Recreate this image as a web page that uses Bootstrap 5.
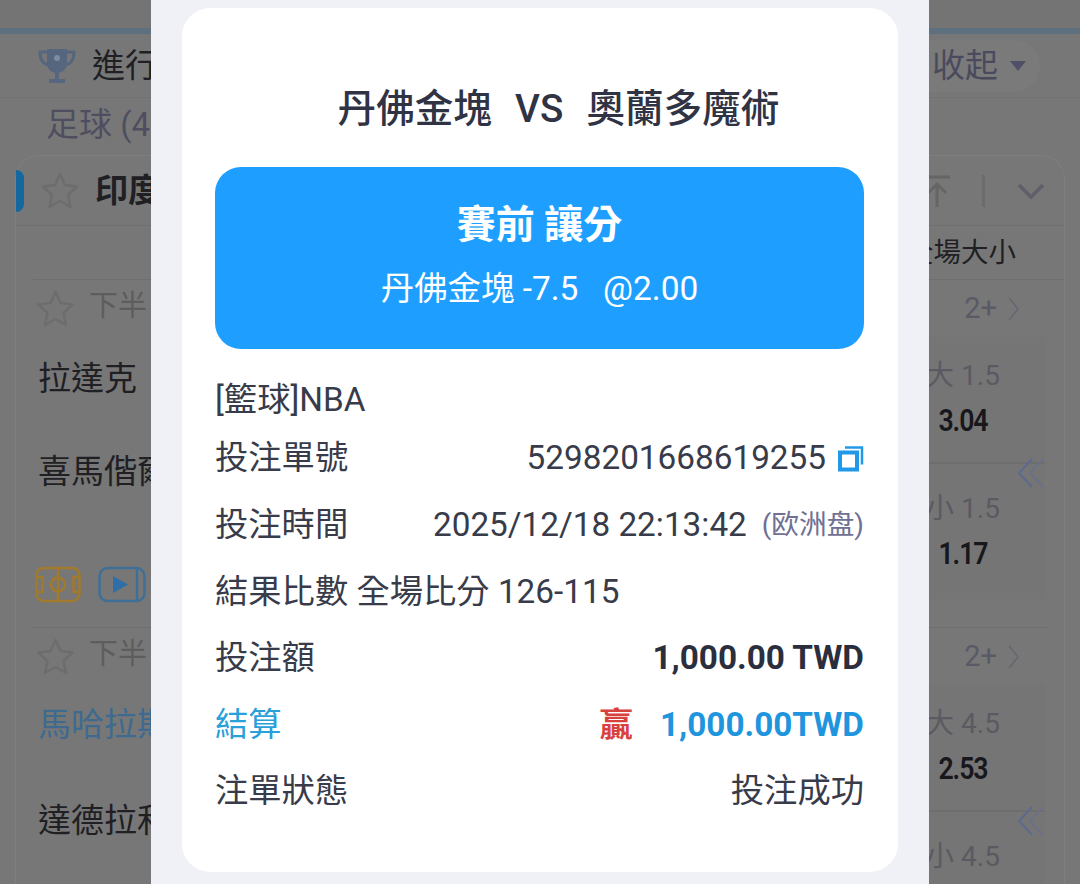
<!DOCTYPE html>
<html lang="zh-Hant">

<head>
    <meta charset="UTF-8">
    <meta name="viewport" content="width=device-width, initial-scale=1.0">
    <title>注單詳情</title>
    <link href="https://cdn.jsdelivr.net/npm/bootstrap@5.3.0/dist/css/bootstrap.min.css" rel="stylesheet">
    <style>
        html, body {
            height: 884px;
            overflow: hidden;
        }

        body {
            font-family: Roboto, "Noto Sans CJK TC", sans-serif;
            background-color: #777777;
            color: #1f1f24;
        }

        svg {
            flex: none;
        }

        .side-l, .side-r {
            width: 151px;
            height: 884px;
            flex: none;
            overflow: hidden;
            white-space: nowrap;
            font-size: 33px;
            line-height: 1.2;
        }

        .sheet {
            width: 778px;
            height: 884px;
            flex: none;
            background-color: #f0f0f7;
            padding: 8px 31px 12px;
        }

        .ticket {
            height: 864px;
            background-color: #fff;
            border: 0;
            border-radius: 28px;
            padding: 78px 34px 0 33px;
            color: #383b49;
        }

        .match-title {
            font-size: 38.6px;
            font-weight: 500;
            line-height: 46px;
            color: #2f3344;
            margin-bottom: 35px;
            padding-left: 38px;
            word-spacing: 2px;
            white-space: pre;
        }

        .bet-box {
            height: 182px;
            background-color: #1e9fff;
            border-radius: 26px;
            color: #fff;
        }

        .bet-kind {
            font-size: 39px;
            font-weight: 700;
            line-height: 44px;
            margin-bottom: 22px;
            margin-top: -5px;
        }

        .bet-odds {
            font-size: 33.4px;
            line-height: 40px;
            white-space: pre;
        }

        .league-row {
            font-size: 33.3px;
            line-height: 40px;
            margin-top: 31px;
            margin-bottom: 5px;
        }

        .info-row {
            height: 66.6px;
            font-size: 33.3px;
            white-space: nowrap;
        }

        .stamp-note {
            font-size: 27.7px;
            color: #6f7093;
            margin-left: 15px;
        }

        .fw-heavy {
            font-weight: 700;
            color: #2b2e3c;
        }

        .settle-label {
            color: #2a9fd8;
        }

        .settle-win {
            color: #d8423e;
            font-weight: 700;
            margin-right: 27px;
        }

        .settle-amt {
            color: #1f95dd;
            font-weight: 700;
        }

        .copy-ico {
            width: 26px;
            height: 27px;
            margin-left: 12px;
        }

        /* dimmed page behind the sheet */
        .top-band {
            height: 28px;
            background-color: #747474;
        }

        .top-rule {
            height: 6px;
            background-color: #5e6f7e;
        }

        .head-row {
            height: 64px;
            border-bottom: 1px solid #727272;
        }

        .trophy-ico {
            margin-left: 38px;
            margin-right: 16px;
        }

        .collapse-wrap {
            padding-right: 40px;
        }

        .collapse-pill {
            color: #4a4a5e;
            background-color: #7a7a7a;
            border-radius: 0 26px 26px 0;
            height: 52px;
            padding-left: 10px;
            padding-right: 14px;
        }

        .collapse-pill svg {
            margin-left: 12px;
        }

        .sport-row {
            height: 57px;
            padding-left: 46px;
            color: #4e4e60;
            line-height: 54px;
        }

        .sport-gap {
            height: 57px;
        }

        .board-l {
            margin-left: 15px;
            border-top: 1px solid #7e7e7e;
            border-left: 1px solid #7e7e7e;
            border-top-left-radius: 24px;
            height: 729px;
        }

        .board-r {
            margin-right: 15px;
            border-top: 1px solid #7e7e7e;
            border-right: 1px solid #7e7e7e;
            border-top-right-radius: 24px;
            height: 729px;
        }

        .league-head {
            height: 70px;
            border-bottom: 1px solid #6f6f6f;
        }

        .league-tools {
            padding-right: 19px;
        }

        .tool-sep {
            margin: 0 32px 0 30px;
        }

        .blue-pill {
            width: 8px;
            height: 42px;
            flex: none;
            background-color: #14679f;
            border-radius: 0 8px 8px 0;
            margin-right: 16px;
        }

        .league-name {
            font-weight: 700;
            margin-left: 15px;
        }

        .blank-l {
            height: 54px;
            margin-left: 17px;
            border-bottom: 1px solid #6f6f6f;
        }

        .half-row {
            height: 57px;
            padding-left: 19px;
            font-size: 29px;
            color: #5d5d5d;
        }

        .half-row span {
            margin-left: 13px;
            margin-top: -4px;
        }

        .team-row {
            padding-left: 22px;
        }

        .team-a {
            height: 84px;
        }

        .team-b {
            height: 102px;
        }

        .team-c {
            height: 80px;
            color: #3e6a90;
        }

        .team-d {
            height: 112px;
        }

        .icons-row {
            height: 105px;
            margin-left: 17px;
            padding: 43px 0 0 2px;
            border-bottom: 1px solid #6f6f6f;
        }

        .video-ico {
            margin-left: 17px;
        }

        .blank-r {
            height: 54px;
            padding-right: 21px;
            border-bottom: 1px solid #6f6f6f;
            font-size: 27.5px;
        }

        .odds-cell {
            width: 164px;
            flex: none;
            text-align: center;
        }

        .more-row {
            height: 57px;
            padding-right: 45px;
            font-size: 29px;
            color: #5a5a66;
        }

        .more-row svg {
            margin-left: 11px;
        }

        .odds-wrap {
            position: relative;
            margin-right: 19px;
            background-color: #757575;
        }

        .odds-box {
            height: 127px;
            border-bottom: 2px solid #6e6e6e;
            padding-top: 21px;
        }

        .odds-box + .odds-box {
            height: 135px;
            border-bottom: 0;
            padding-top: 27px;
        }

        .odds-line {
            font-size: 28px;
            line-height: 36px;
            color: #5a5a62;
            width: 164px;
            flex: none;
            text-align: center;
        }

        .odds-num {
            font-size: 31px;
            font-weight: 600;
            line-height: 36px;
            margin-top: 9px;
            letter-spacing: -1.2px;
            color: #17171c;
            width: 164px;
            flex: none;
            text-align: center;
            transform: scaleX(.86);
        }

        .back-arrows {
            position: absolute;
            right: 0;
            top: 121px;
        }

        .spacer-r {
            height: 29px;
            border-bottom: 1px solid #6f6f6f;
            margin-right: 17px;
        }
    </style>
</head>

<body>
    <div class="d-flex">
        <div class="side-l">
            <div class="top-band"></div>
            <div class="top-rule"></div>
            <div class="head-row d-flex align-items-center">
                <svg class="trophy-ico" width="38" height="38" viewBox="0 0 38 38">
                    <path d="M9 2h20v13c0 7-4 11-10 11S9 22 9 15z" fill="#56667f" />
                    <path d="M9 5H2c0 8 3 12 9 13M29 5h7c0 8-3 12-9 13" fill="none" stroke="#56667f" stroke-width="3" />
                    <path d="M17 26h4v6h-4zM11 32h16v4H11z" fill="#56667f" />
                    <circle cx="19" cy="11" r="3" fill="#7f8ca0" />
                </svg>
                <span>進行中</span>
            </div>
            <div class="sport-row">足球 (42)</div>
            <div class="board-l">
                <div class="league-head d-flex align-items-center">
                    <div class="blue-pill"></div>
                    <svg width="40" height="40" viewBox="0 0 40 40">
                        <path d="M20 3l5 11 12 1.500-9 8.500 2.500 12L20 30l-10.500 6L12 24 3 15.500 15 14z" fill="none" stroke="#6d6d6d" stroke-width="2.500" stroke-linejoin="round" />
                    </svg>
                    <span class="league-name">印度超級聯賽</span>
                </div>
                <div class="blank-l"></div>
                <div class="half-row d-flex align-items-center">
                    <svg width="41" height="40" viewBox="0 0 40 40">
                        <path d="M20 3l5 11 12 1.500-9 8.500 2.500 12L20 30l-10.500 6L12 24 3 15.500 15 14z" fill="none" stroke="#6d6d6d" stroke-width="2.500" stroke-linejoin="round" />
                    </svg>
                    <span>下半</span>
                </div>
                <div class="team-row team-a d-flex align-items-center">拉達克</div>
                <div class="team-row team-b d-flex align-items-center">喜馬偕爾</div>
                <div class="icons-row d-flex align-items-start">
                    <svg width="46" height="38" viewBox="0 0 46 38" fill="none" stroke="#a17a2c" stroke-width="2.500">
                        <rect x="1.500" y="2" width="43" height="33" rx="7" />
                        <path d="M23 2v33M1.500 11h6v15h-6M44.500 11h-6v15h6" />
                        <circle cx="23" cy="18.500" r="7" />
                    </svg>
                    <svg class="video-ico" width="48" height="38" viewBox="0 0 48 38" fill="none" stroke="#3f6f96" stroke-width="2.500">
                        <rect x="1.500" y="2" width="45" height="33" rx="8" />
                        <path d="M39 2v33" />
                        <path d="M15 10l15 8.500L15 27z" fill="#2f6ea6" stroke="none" />
                    </svg>
                </div>
                <div class="half-row d-flex align-items-center">
                    <svg width="41" height="40" viewBox="0 0 40 40">
                        <path d="M20 3l5 11 12 1.500-9 8.500 2.500 12L20 30l-10.500 6L12 24 3 15.500 15 14z" fill="none" stroke="#6d6d6d" stroke-width="2.500" stroke-linejoin="round" />
                    </svg>
                    <span>下半</span>
                </div>
                <div class="team-row team-c d-flex align-items-center">馬哈拉斯特拉</div>
                <div class="team-row team-d d-flex align-items-center">達德拉和納加爾</div>
            </div>
        </div>

        <div class="sheet">
            <div class="card ticket">
                <div class="match-title text-center">丹佛金塊  VS  奧蘭多魔術</div>
                <div class="bet-box d-flex flex-column align-items-center justify-content-center">
                    <div class="bet-kind">賽前 讓分</div>
                    <div class="bet-odds">丹佛金塊 -7.5   @2.00</div>
                </div>
                <div class="league-row">[籃球]NBA</div>
                <div class="info-row d-flex justify-content-between align-items-center">
                    <span>投注單號</span>
                    <span class="d-flex align-items-center">5298201668619255
                        <svg class="copy-ico" viewBox="0 0 26 27" fill="none" stroke="#2199e8">
                            <rect x="2" y="7.500" width="17" height="17" stroke-width="4" />
                            <path d="M7 2.500h17v17" stroke-width="2.500" />
                        </svg>
                    </span>
                </div>
                <div class="info-row d-flex justify-content-between align-items-center">
                    <span>投注時間</span>
                    <span class="d-flex align-items-center">2025/12/18 22:13:42<span class="stamp-note" lang="zh-Hans">(欧洲盘)</span></span>
                </div>
                <div class="info-row d-flex align-items-center">結果比數 全場比分 126-115</div>
                <div class="info-row d-flex justify-content-between align-items-center">
                    <span>投注額</span>
                    <span class="fw-heavy">1,000.00 TWD</span>
                </div>
                <div class="info-row d-flex justify-content-between align-items-center">
                    <span class="settle-label">結算</span>
                    <span><span class="settle-win">贏</span><span class="settle-amt">1,000.00TWD</span></span>
                </div>
                <div class="info-row d-flex justify-content-between align-items-center">
                    <span>注單狀態</span>
                    <span>投注成功</span>
                </div>
            </div>
        </div>

        <div class="side-r">
            <div class="top-band"></div>
            <div class="top-rule"></div>
            <div class="head-row collapse-wrap d-flex align-items-center justify-content-end">
                <span class="collapse-pill d-flex align-items-center flex-shrink-0">收起
                    <svg width="16" height="10" viewBox="0 0 16 10">
                        <path d="M0 0h16L8 10z" fill="#4f5068" />
                    </svg>
                </span>
            </div>
            <div class="sport-gap"></div>
            <div class="board-r">
                <div class="league-head league-tools d-flex align-items-center justify-content-end">
                    <svg width="30" height="34" viewBox="0 0 30 34" fill="none" stroke="#656565" stroke-width="3">
                        <path d="M2 3h26M15 33V11M6 19l9-9 9 9" />
                    </svg>
                    <svg class="tool-sep" width="3" height="32">
                        <rect width="3" height="32" fill="#6c6c6c" />
                    </svg>
                    <svg width="28" height="16" viewBox="0 0 28 16" fill="none" stroke="#5f5f6c" stroke-width="3.500">
                        <path d="M2 2l12 12L26 2" />
                    </svg>
                </div>
                <div class="blank-r d-flex align-items-center justify-content-end">
                    <div class="odds-cell">全場大小</div>
                </div>
                <div class="more-row d-flex align-items-center justify-content-end">
                    <span>2+</span>
                    <svg width="11" height="24" viewBox="0 0 11 24" fill="none" stroke="#666670" stroke-width="1.500">
                        <path d="M1 1l9 11-9 11" />
                    </svg>
                </div>
                <div class="odds-wrap">
                    <div class="odds-box d-flex flex-column align-items-end">
                        <div class="odds-line">大 1.5</div>
                        <div class="odds-num">3.04</div>
                    </div>
                    <div class="odds-box d-flex flex-column align-items-end">
                        <div class="odds-line">小 1.5</div>
                        <div class="odds-num">1.17</div>
                    </div>
                    <svg class="back-arrows" width="28" height="30" viewBox="0 0 28 30" fill="none" stroke-width="2">
                        <path d="M15 1L2 15l13 14" stroke="#5c6a90" />
                        <path d="M26 1L13 15l13 14" stroke="#6a7088" />
                    </svg>
                </div>
                <div class="spacer-r"></div>
                <div class="more-row d-flex align-items-center justify-content-end">
                    <span>2+</span>
                    <svg width="11" height="24" viewBox="0 0 11 24" fill="none" stroke="#666670" stroke-width="1.500">
                        <path d="M1 1l9 11-9 11" />
                    </svg>
                </div>
                <div class="odds-wrap">
                    <div class="odds-box d-flex flex-column align-items-end">
                        <div class="odds-line">大 4.5</div>
                        <div class="odds-num">2.53</div>
                    </div>
                    <div class="odds-box d-flex flex-column align-items-end">
                        <div class="odds-line">小 4.5</div>
                    </div>
                    <svg class="back-arrows" width="28" height="30" viewBox="0 0 28 30" fill="none" stroke-width="2">
                        <path d="M15 1L2 15l13 14" stroke="#5c6a90" />
                        <path d="M26 1L13 15l13 14" stroke="#6a7088" />
                    </svg>
                </div>
            </div>
        </div>
    </div>

    <script src="https://cdn.jsdelivr.net/npm/bootstrap@5.3.0/dist/js/bootstrap.bundle.min.js"></script>
</body>

</html>
